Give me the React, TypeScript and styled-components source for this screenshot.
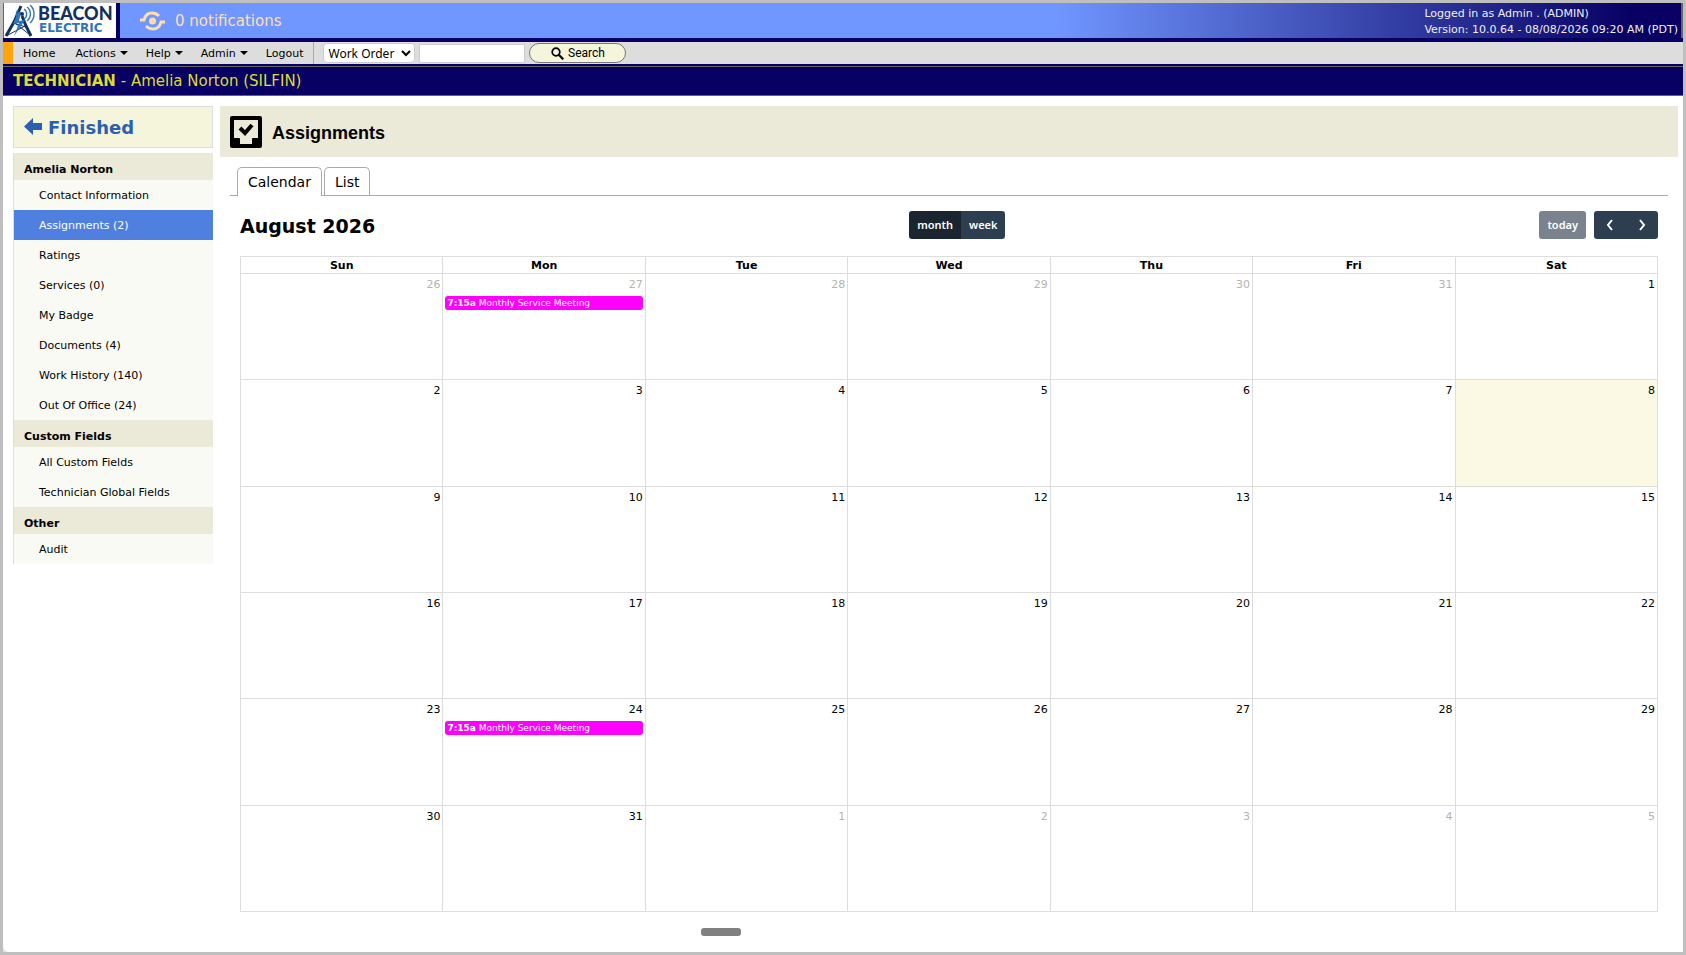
import React from "react";
import styled, { createGlobalStyle, css } from "styled-components";

const NAVY = "#080063";
const LINE = "#dddddd";

const GlobalStyle = createGlobalStyle`
  *, *::before, *::after { box-sizing: border-box; }
  body {
    margin: 0;
    background: #bfbfbf;
    color: #000;
    font-family: Verdana, "DejaVu Sans", sans-serif;
    font-size: 11px;
  }
  button, input, select { font-family: inherit; color: inherit; }
`;

const Frame = styled.div`
  display: flex;
  flex-direction: column;
  min-height: 100vh;
  border: 3px solid #bfbfbf;
  background: #ffdcb4;
`;

const Page = styled.div`
  flex: 1;
  display: flex;
  flex-direction: column;
  background: #fff;
  border-bottom-left-radius: 6px;
`;

const Banner = styled.header`
  display: flex;
  height: 39px;
  background: ${NAVY};
  border-bottom: 4px solid ${NAVY};
`;

const LogoLink = styled.a`
  flex: none;
  width: 113px;
  margin-right: 4px;
  border-left: 1px solid #666;
  background: #fff;
  svg { display: block; }
`;

const BannerFill = styled.div`
  flex: 1;
  display: flex;
  align-items: center;
  justify-content: space-between;
  padding: 0 3px 0 19px;
  border-right: 2px solid #666;
  background: linear-gradient(to right, #7096ff 60%, ${NAVY} 97%);
`;

const Notifications = styled.a`
  display: flex;
  align-items: center;
  gap: 9px;
  color: #ffdead;
  font-size: 15px;
  text-decoration: none;
`;

const Session = styled.div`
  padding-top: 2px;
  color: #eee;
  line-height: 16px;
`;

const MenuBar = styled.nav`
  display: flex;
  align-items: center;
  height: 22px;
  background: #ddd;
  border-left: 10px solid #ffa40d;
`;

const Menus = styled.div`
  display: flex;
  align-items: center;
  gap: 20px;
  height: 100%;
  padding: 0 10px;
  border-right: 1px solid #aaa;
`;

const menuItem = css`
  display: flex;
  align-items: center;
  gap: 4px;
  padding: 0;
  border: 0;
  background: none;
  color: #000;
  font-size: 11px;
  text-decoration: none;
`;
const MenuLink = styled.a`${menuItem}`;
const MenuButton = styled.button`
  ${menuItem}
  &::after {
    content: "";
    margin-right: -2px;
    border: 4px solid transparent;
    border-top-color: #000;
    border-bottom: 0;
  }
`;

const SearchForm = styled.form`
  display: flex;
  align-items: center;
  gap: 4px;
  padding-left: 9px;
`;

const SearchType = styled.select`
  width: 92px;
  height: 20px;
  padding: 0;
  border: 1px solid #ccc;
  border-radius: 4px;
  background: #fff;
  font-family: "Noto Sans", sans-serif;
  font-size: 12px;
`;

const SearchBox = styled.input`
  width: 106px;
  height: 19px;
  border: 1px solid #ccc;
  background: #fff;
`;

const SearchButton = styled.button`
  display: flex;
  align-items: center;
  justify-content: center;
  gap: 4px;
  width: 97px;
  height: 20px;
  padding: 0;
  border: 1px solid #777;
  border-radius: 10px;
  background: #f5f5dc;
  font-family: Roboto, sans-serif;
  font-size: 12px;
`;

const RecordBar = styled.div`
  padding-top: 2px;
  background: ${NAVY};
  color: #dcdc32;
  font-size: 15px;
  line-height: 28px;
`;

const RecordTitle = styled.div`
  padding-left: 10px;
  border: solid #666;
  border-width: 1px 0;
`;

const Body = styled.div`
  flex: 1;
  display: flex;
  align-items: flex-start;
  gap: 7px;
  padding: 10px 5px 0 10px;
`;

const Sidebar = styled.aside`
  flex: none;
  width: 200px;
`;

const Finished = styled.a`
  display: flex;
  align-items: center;
  gap: 6px;
  height: 42px;
  margin-bottom: 5px;
  padding-left: 10px;
  border: 1px solid #ddd;
  background: #f5f5dc;
  color: #2b5fb0;
  font-size: 18px;
  font-weight: bold;
  text-decoration: none;
`;

const Group = styled.section`
  border-left: 1px solid #ddd;
`;

const GroupTitle = styled.h2`
  margin: 0;
  height: 27px;
  padding: 5px 10px 0;
  background: #ebe9d7;
  font-size: 11px;
  line-height: 24px;
`;

const SideLink = styled.a<{ $active?: boolean }>`
  display: block;
  padding: 2px 0 0 25px;
  background: ${(p) => (p.$active ? "#5080df" : "#f9faf4")};
  color: ${(p) => (p.$active ? "#fff" : "#000")};
  line-height: 28px;
  text-decoration: none;
`;

const Main = styled.main`
  flex: 1;
  min-width: 0;
`;

const Heading = styled.div`
  display: flex;
  align-items: center;
  gap: 10px;
  height: 51px;
  padding: 1px 0 0 10px;
  background: #ebe9d7;
  h1 {
    margin: 0;
    padding-top: 2px;
    font-family: Arial, "Liberation Sans", sans-serif;
    font-size: 18px;
  }
`;

const Tabs = styled.div`
  display: flex;
  gap: 2px;
  margin: 10px 10px 0;
  padding-left: 7px;
  border-bottom: 1px solid #aaa;
`;

const Tab = styled.button<{ $active?: boolean }>`
  height: ${(p) => (p.$active ? 29 : 28)}px;
  margin-bottom: ${(p) => (p.$active ? -1 : 0)}px;
  padding: 0 10px;
  border: 1px solid #aaa;
  border-bottom: 0;
  border-radius: 5px 5px 0 0;
  background: #fff;
  font-size: 14px;
`;

const Calendar = styled.section`
  padding: 15px 20px 0;
`;

const Toolbar = styled.div`
  display: flex;
  justify-content: space-between;
  align-items: flex-start;
  margin-bottom: 15px;
  h2 { margin: 0; font-size: 19px; line-height: 30px; }
`;

const ButtonGroup = styled.div`
  display: flex;
  border-radius: 3px;
  overflow: hidden;
`;

const Right = styled.div`
  display: flex;
  gap: 8px;
`;

const CalButton = styled.button<{ $tone?: "active" | "muted" }>`
  display: flex;
  align-items: center;
  justify-content: center;
  height: 28px;
  padding: 0 8px;
  border: 0;
  border-radius: ${(p) => (p.$tone === "muted" ? 3 : 0)}px;
  background: ${(p) => (p.$tone === "active" ? "#1a252f" : p.$tone === "muted" ? "#7a838d" : "#2c3e50")};
  color: #fff;
  font-family: "Noto Sans", sans-serif;
  font-size: 11px;
  font-weight: 600;
  line-height: 14px;
  padding-bottom: 1px;
`;

const Grid = styled.table`
  width: 100%;
  height: 656px;
  table-layout: fixed;
  border-collapse: collapse;
  th {
    height: 17px;
    padding: 0;
    border: 1px solid ${LINE};
    font-size: 11px;
    line-height: 15px;
  }
`;

const Day = styled.td<{ $other?: boolean; $today?: boolean }>`
  height: 106px;
  padding: 3px 2px;
  border: 1px solid ${LINE};
  background: ${(p) => (p.$today ? "#fbf8e3" : "transparent")};
  vertical-align: top;
  time {
    display: block;
    color: ${(p) => (p.$other ? "#b3b3b3" : "#000")};
    line-height: 15px;
    text-align: right;
  }
`;

const Event = styled.a`
  display: block;
  margin-top: 4px;
  padding-left: 2px;
  border-radius: 3px;
  background: #f0f;
  color: #fff;
  font-size: 9px;
  line-height: 14px;
  text-decoration: none;
  white-space: nowrap;
  overflow: hidden;
`;

const Grip = styled.div`
  width: 40px;
  height: 8px;
  margin: 16px 0 16px 33%;
  border-radius: 3px;
  background: #808080;
`;

const Logo = () => (
  <svg width="112" height="35" viewBox="0 0 112 35" role="img" aria-label="Beacon Electric">
    <g fill="none" stroke="#12315f">
      <path d="M17 3 10 19 2 33" strokeWidth="3" />
      <path d="M18 13 22 23 27 33" strokeWidth="3" />
      <path d="M9 20 22 24M4 32l17-9M26 32 11 20" strokeWidth="1" />
    </g>
    <path d="M14 9 9 21l6-1-5 13 11-16-6 1 2-9Z" fill="#2f75b8" />
    <circle cx="18" cy="11" r="2" fill="#12315f" />
    <g fill="none" stroke="#2f75b8" strokeWidth="1.400">
      <path d="M20 6a6 6 0 0 1 0 10M23 4a9 9 0 0 1 0 14M26 2a12 12 0 0 1 0 18M14 7a6 6 0 0 0 0 8" />
    </g>
    <text x="34" y="17" fill="#12315f" fontFamily="Lato, sans-serif" fontWeight="900" fontSize="18">BEACON</text>
    <text x="35" y="29" fill="#2f75b8" fontFamily="DejaVu Sans, sans-serif" fontWeight="bold" fontSize="12">ELECTRIC</text>
  </svg>
);

const SignalIcon = () => (
  <svg width="27" height="20" viewBox="0 0 27 20" fill="none" stroke="#ffdead" strokeWidth="3" aria-hidden="true">
    <path d="M1 9h4c1-4 4-7 8-7 3 0 5 1 7 3M26 11h-4c-1 4-4 7-8 7-3 0-5-1-7-3" />
    <circle cx="13.500" cy="10" r="3.500" fill="#ffdead" stroke="none" />
  </svg>
);

const SearchIcon = () => (
  <svg width="13" height="13" viewBox="0 0 13 13" fill="none" stroke="#000" strokeWidth="1.700" aria-hidden="true">
    <circle cx="5" cy="5" r="3.800" />
    <path d="m8 8 4.300 4.300" strokeWidth="2.200" />
  </svg>
);

const BackIcon = () => (
  <svg width="18" height="18" viewBox="0 0 18 18" aria-hidden="true">
    <path d="M0 8.500 9 0v5h9v7H9v5Z" fill="#2b5fb0" />
  </svg>
);

const InboxIcon = () => (
  <svg width="32" height="32" viewBox="0 0 32 32" aria-hidden="true">
    <path fillRule="evenodd" d="M2 0h28q2 0 2 2v28q0 2-2 2H2q-2 0-2-2V2q0-2 2-2ZM4 4v18h5q1 0 1 1v5h12v-5q0-1 1-1h5V4Z" />
    <path d="m10 12 5 5 7-8" fill="none" stroke="#000" strokeWidth="4" />
  </svg>
);

const Chevron = ({ d }: { d: string }) => (
  <svg width="16" height="16" viewBox="0 0 16 16" fill="none" stroke="#fff" strokeWidth="2" aria-hidden="true">
    <path d={d} />
  </svg>
);

const groups = [
  {
    title: "Amelia Norton",
    items: ["Contact Information", "Assignments (2)", "Ratings", "Services (0)", "My Badge", "Documents (4)", "Work History (140)", "Out Of Office (24)"],
  },
  { title: "Custom Fields", items: ["All Custom Fields", "Technician Global Fields"] },
  { title: "Other", items: ["Audit"] },
];

const weekdays = ["Sun", "Mon", "Tue", "Wed", "Thu", "Fri", "Sat"];
const weeks = Array.from({ length: 6 }, (_, w) =>
  Array.from({ length: 7 }, (_, d) => new Date(2026, 6, 26 + w * 7 + d)),
);

const hasMeeting = (d: Date) =>
  (d.getMonth() === 6 && d.getDate() === 27) || (d.getMonth() === 7 && d.getDate() === 24);

export default function App() {
  return (
    <>
      <GlobalStyle />
      <Frame>
        <Page>
          <Banner>
            <LogoLink href="#"><Logo /></LogoLink>
            <BannerFill>
              <Notifications href="#"><SignalIcon />0 notifications</Notifications>
              <Session>
                <div>Logged in as Admin . (ADMIN)</div>
                <div>Version: 10.0.64 - 08/08/2026 09:20 AM (PDT)</div>
              </Session>
            </BannerFill>
          </Banner>
          <MenuBar>
            <Menus>
              <MenuLink href="#">Home</MenuLink>
              <MenuButton>Actions</MenuButton>
              <MenuButton>Help</MenuButton>
              <MenuButton>Admin</MenuButton>
              <MenuLink href="#">Logout</MenuLink>
            </Menus>
            <SearchForm>
              <SearchType aria-label="Search type"><option>Work Order</option></SearchType>
              <SearchBox type="text" aria-label="Search text" />
              <SearchButton type="button"><SearchIcon />Search</SearchButton>
            </SearchForm>
          </MenuBar>
          <RecordBar>
            <RecordTitle><strong>TECHNICIAN</strong> - Amelia Norton (SILFIN)</RecordTitle>
          </RecordBar>
          <Body>
            <Sidebar>
              <Finished href="#"><BackIcon />Finished</Finished>
              {groups.map((g) => (
                <Group key={g.title}>
                  <GroupTitle>{g.title}</GroupTitle>
                  {g.items.map((item) => (
                    <SideLink key={item} href="#" $active={item.startsWith("Assignments")}>{item}</SideLink>
                  ))}
                </Group>
              ))}
            </Sidebar>
            <Main>
              <Heading><InboxIcon /><h1>Assignments</h1></Heading>
              <Tabs role="tablist">
                <Tab role="tab" aria-selected $active>Calendar</Tab>
                <Tab role="tab" aria-selected={false}>List</Tab>
              </Tabs>
              <Calendar>
                <Toolbar>
                  <h2>August 2026</h2>
                  <ButtonGroup>
                    <CalButton $tone="active">month</CalButton>
                    <CalButton>week</CalButton>
                  </ButtonGroup>
                  <Right>
                    <CalButton $tone="muted">today</CalButton>
                    <ButtonGroup>
                      <CalButton aria-label="Previous month"><Chevron d="m10 3-4 5 4 5" /></CalButton>
                      <CalButton aria-label="Next month"><Chevron d="m6 3 4 5-4 5" /></CalButton>
                    </ButtonGroup>
                  </Right>
                </Toolbar>
                <Grid>
                  <thead><tr>{weekdays.map((d) => <th key={d} scope="col">{d}</th>)}</tr></thead>
                  <tbody>
                    {weeks.map((week, w) => (
                      <tr key={w}>
                        {week.map((d) => (
                          <Day key={d.getTime()} $other={d.getMonth() !== 7} $today={d.getMonth() === 7 && d.getDate() === 8}>
                            <time>{d.getDate()}</time>
                            {hasMeeting(d) && <Event href="#"><strong>7:15a</strong> Monthly Service Meeting</Event>}
                          </Day>
                        ))}
                      </tr>
                    ))}
                  </tbody>
                </Grid>
              </Calendar>
              <Grip />
            </Main>
          </Body>
        </Page>
      </Frame>
    </>
  );
}
